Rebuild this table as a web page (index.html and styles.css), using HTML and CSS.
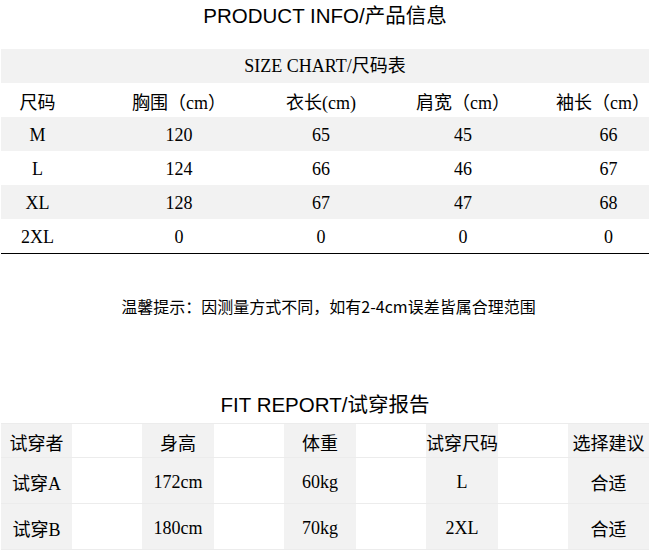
FILE: index.html
```html
<!DOCTYPE html>
<html lang="zh-CN">
<head>
<meta charset="utf-8">
<title>Product Info</title>
<link rel="stylesheet" href="styles.css">
</head>
<body>
<div class="page">
  <h1 class="title">PRODUCT INFO/产品信息</h1>

  <div class="size-chart">
    <div class="band">SIZE CHART/尺码表</div>
    <div class="row head">
      <span>尺码</span><span>胸围（cm）</span><span>衣长(cm)</span><span>肩宽（cm）</span><span>袖长（cm）</span>
    </div>
    <div class="row alt">
      <span>M</span><span>120</span><span>65</span><span>45</span><span>66</span>
    </div>
    <div class="row">
      <span>L</span><span>124</span><span>66</span><span>46</span><span>67</span>
    </div>
    <div class="row alt">
      <span>XL</span><span>128</span><span>67</span><span>47</span><span>68</span>
    </div>
    <div class="row">
      <span>2XL</span><span>0</span><span>0</span><span>0</span><span>0</span>
    </div>
  </div>

  <p class="note">温馨提示：因测量方式不同，如有2-4cm误差皆属合理范围</p>

  <h2 class="title fit-title">FIT REPORT/试穿报告</h2>

  <div class="fit">
    <div class="fit-row head">
      <span class="cell">试穿者</span><span class="gap"></span>
      <span class="cell">身高</span><span class="gap"></span>
      <span class="cell">体重</span><span class="gap"></span>
      <span class="cell">试穿尺码</span><span class="gap"></span>
      <span class="cell">选择建议</span>
    </div>
    <div class="fit-row">
      <span class="cell">试穿A</span><span class="gap"></span>
      <span class="cell">172cm</span><span class="gap"></span>
      <span class="cell">60kg</span><span class="gap"></span>
      <span class="cell">L</span><span class="gap"></span>
      <span class="cell">合适</span>
    </div>
    <div class="fit-row">
      <span class="cell">试穿B</span><span class="gap"></span>
      <span class="cell">180cm</span><span class="gap"></span>
      <span class="cell">70kg</span><span class="gap"></span>
      <span class="cell">2XL</span><span class="gap"></span>
      <span class="cell">合适</span>
    </div>
  </div>
</div>
</body>
</html>
```

FILE: styles.css
```css
html, body {
  margin: 0;
  padding: 0;
  background: #ffffff;
  color: #000000;
}

.page {
  width: 648px;
  padding-left: 1px;
  overflow: hidden;
}

.title {
  margin: 0 0 17px;
  font-family: "Liberation Sans", "Noto Sans CJK SC", sans-serif;
  font-weight: 400;
  font-size: 20.5px;
  line-height: 32px;
  text-align: center;
}

/* Size chart */
.size-chart {
  font-family: "Liberation Serif", "Noto Sans CJK SC", serif;
  font-size: 18px;
  border-bottom: 1px solid #000;
}

.band {
  height: 34px;
  line-height: 34px;
  background: #f2f2f2;
  text-align: center;
}

.row {
  display: grid;
  grid-template-columns: 107px 142px 142px 142px 1fr;
  height: 34px;
}

.row > span {
  display: flex;
  align-items: center;
  justify-content: center;
  white-space: nowrap;
  padding-top: 2px;
}

.row > span:first-child {
  padding-right: 34px;
}

.row > span:last-child {
  padding-left: 34px;
}

.row.head > span:last-child {
  padding-left: 22px;
}

.alt {
  background: #f2f2f2;
}

/* Note */
.note {
  margin: 42px 0 0;
  font-family: "Noto Sans CJK SC", sans-serif;
  font-size: 16px;
  line-height: 20px;
  text-align: center;
  padding-left: 7px;
}

.fit-title {
  margin: 73px 0 2px;
}

/* Fit report */
.fit {
  font-family: "Liberation Serif", "Noto Sans CJK SC", serif;
  font-size: 18px;
  border-bottom: 1px solid #ececec;
}

.fit-row {
  display: grid;
  grid-template-columns: 71px 70px 72px 70px 72px 70px 72px 70px 1fr;
  box-sizing: border-box;
  height: 46px;
  border-top: 1px solid #ececec;
}

.fit-row.head {
  height: 34px;
}

.cell {
  background: #f2f2f2;
  display: flex;
  align-items: center;
  justify-content: center;
  white-space: nowrap;
  padding-top: 3px;
}

.gap {
  background: #ffffff;
}
```
